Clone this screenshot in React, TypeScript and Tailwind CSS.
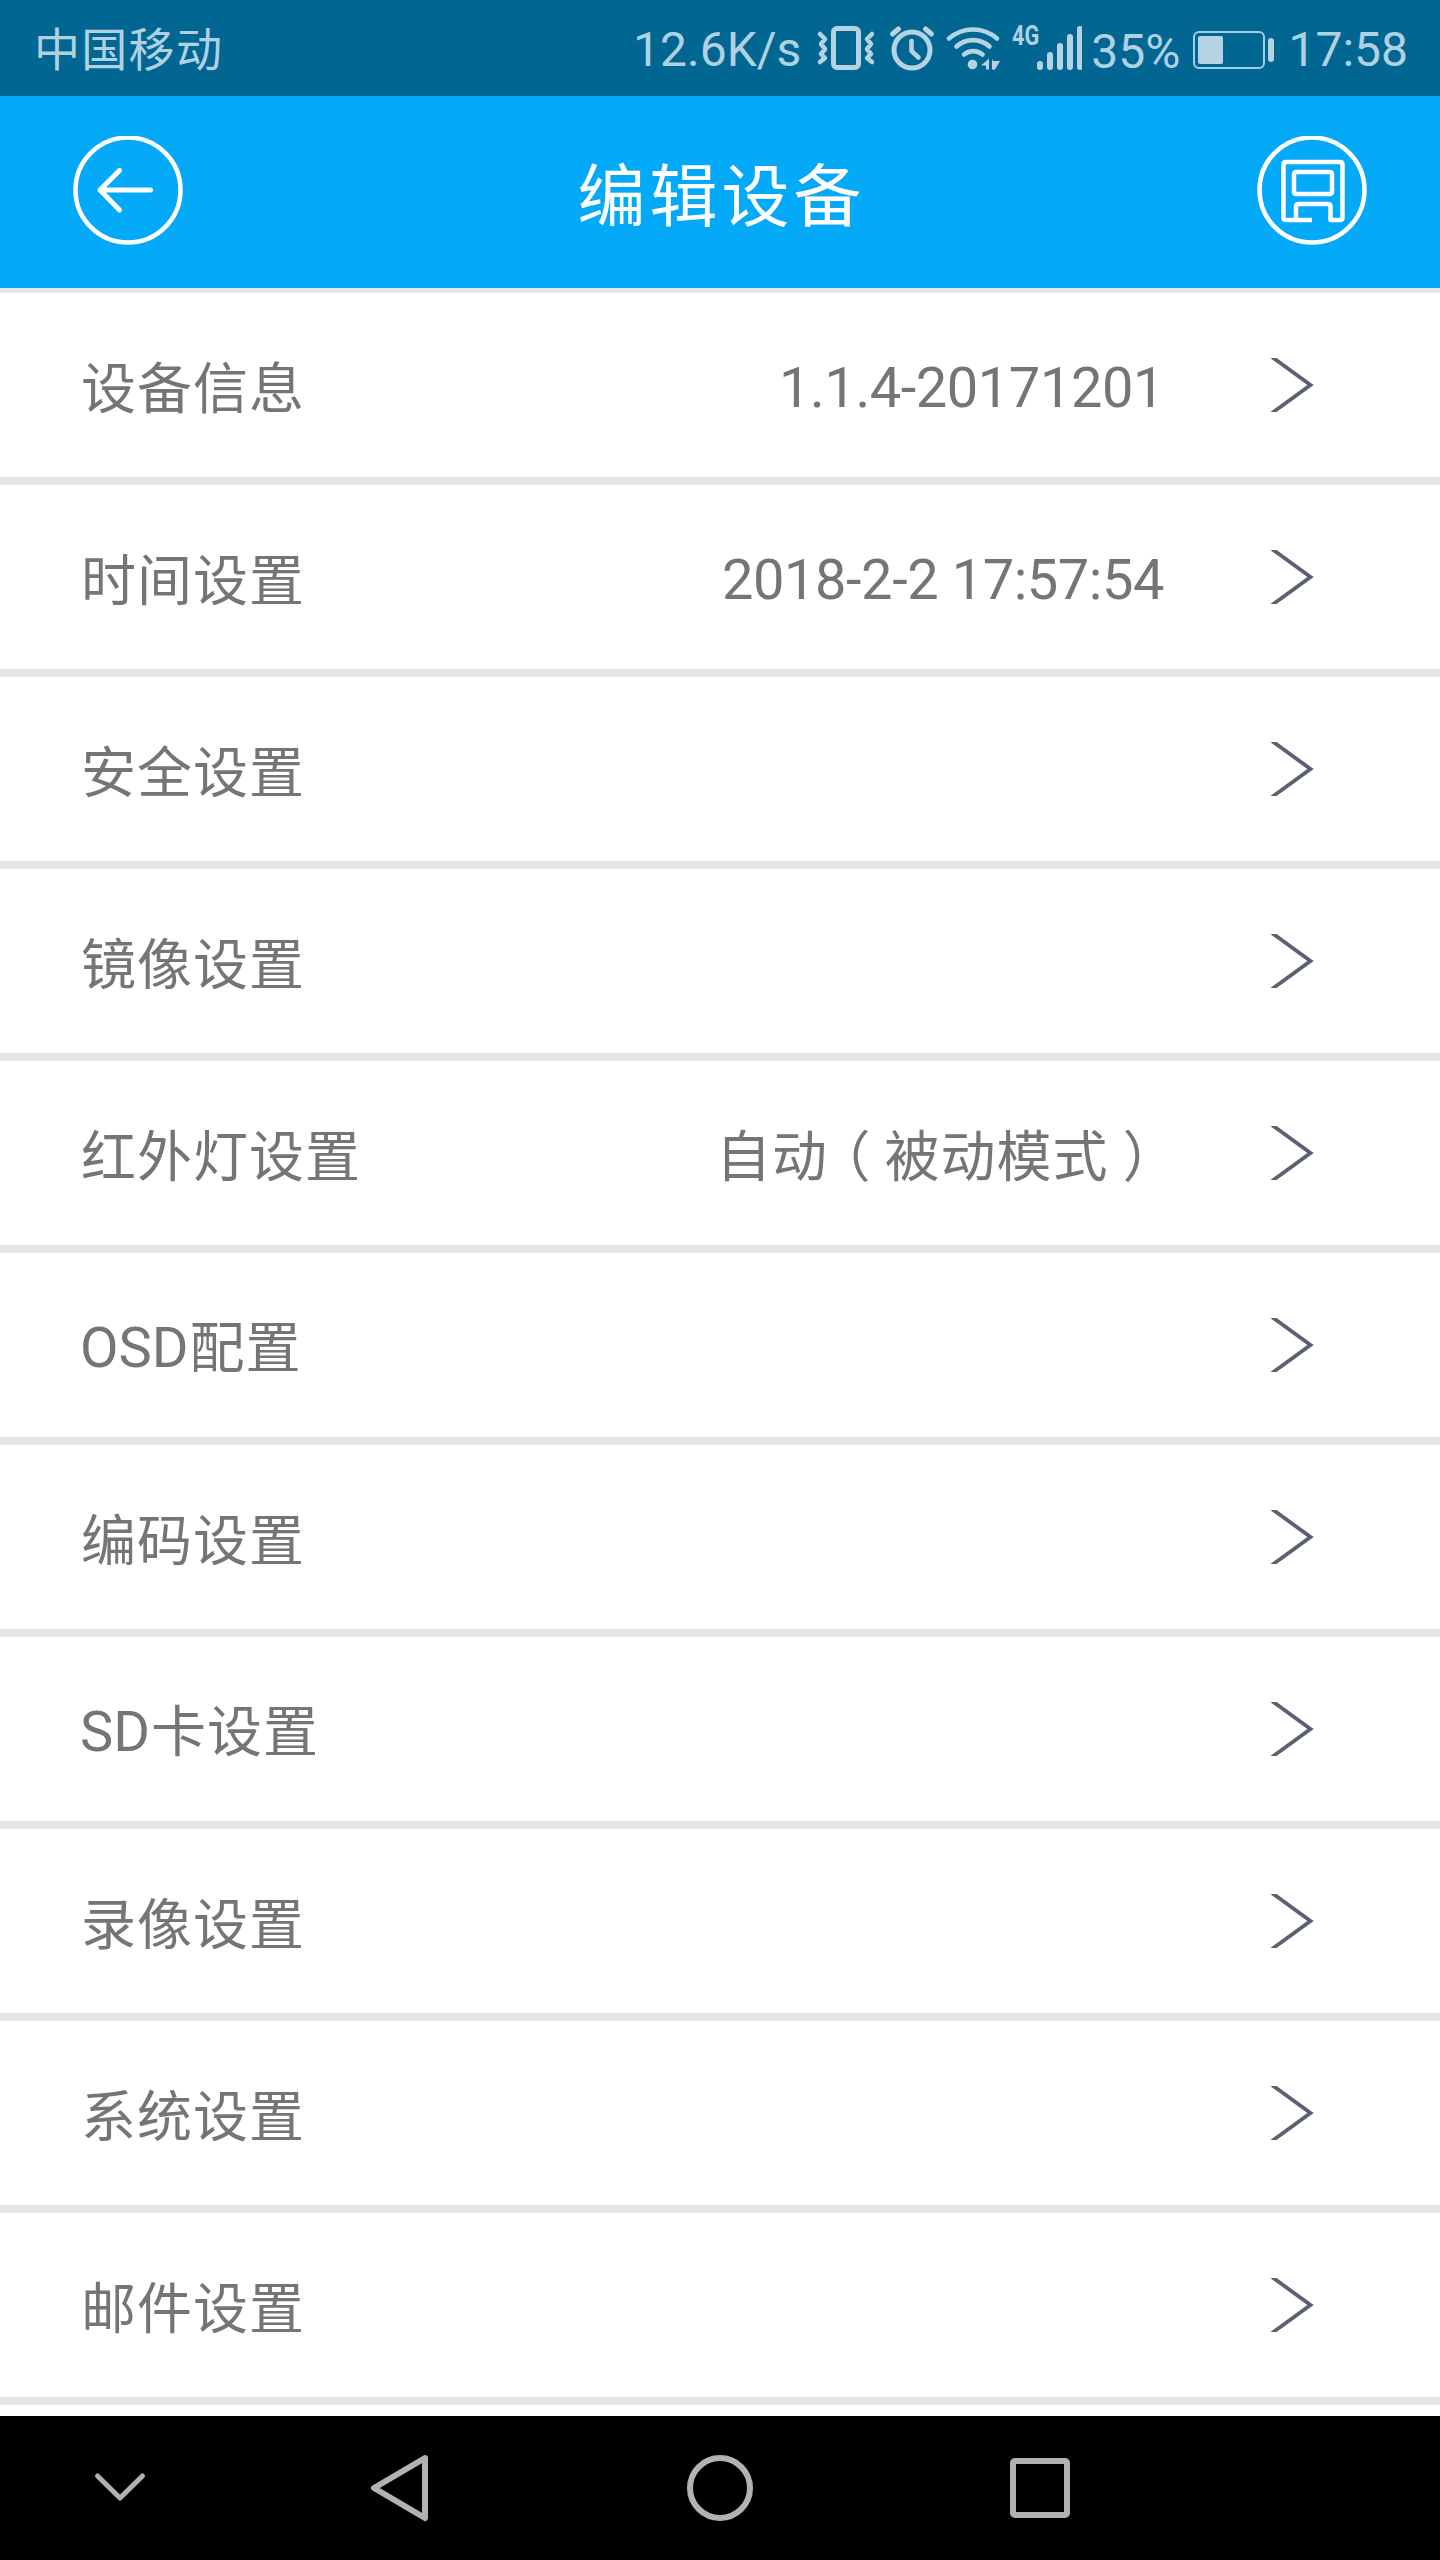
import type { ReactNode } from "react";

const rows: { label: string; latin?: string; value?: ReactNode; numeric?: boolean }[] = [
  { label: "设备信息", value: "1.1.4-20171201", numeric: true },
  { label: "时间设置", value: "2018-2-2 17:57:54", numeric: true },
  { label: "安全设置" },
  { label: "镜像设置" },
  {
    label: "红外灯设置",
    value: (
      <>
        自动<span className="ml-[15px] mr-[13px] [font-feature-settings:'halt']">（</span>被动模式
        <span className="ml-[14px] mr-[13px] [font-feature-settings:'halt']">）</span>
      </>
    ),
  },
  { label: "配置", latin: "OSD" },
  { label: "编码设置" },
  { label: "卡设置", latin: "SD" },
  { label: "录像设置" },
  { label: "系统设置" },
  { label: "邮件设置" },
];

function StatusIcons() {
  return (
    <svg className="ml-[15px] h-[96px] w-[266px] shrink-0" viewBox="816 0 266 96" fill="none" stroke="#b5d3e2" strokeLinecap="round" strokeLinejoin="round">
      {/* vibrate */}
      <rect x="833.5" y="28.5" width="25" height="39" rx="3.5" strokeWidth="5" />
      <path d="M820 34l5 5-4 5 4 5-4 5 4 4-5 4M872 34l-5 5 4 5-4 5 4 5-4 4 5 4" strokeWidth="4.5" />
      {/* alarm */}
      <circle cx="912" cy="50" r="18" strokeWidth="5" />
      <path d="M911.5 41v10l7 6.500" strokeWidth="4.600" />
      <path d="M892.500 34l6-5M931.500 34l-6-5" strokeWidth="5" />
      {/* wifi */}
      <path d="M949 38.500C963 26.500 983 26.500 997 38.500M956.500 46.500C966 38 980 38 989.500 46.500M964 54.500C969.500 50 977 50 982.500 54.500" strokeWidth="4.600" />
      <circle cx="972.500" cy="64.500" r="4.800" fill="#b5d3e2" stroke="none" />
      <path d="M989 58.500v11h-3v-4H981zM992 69.500v-11l1 2.500h7l-5 8.500z" fill="#b5d3e2" stroke="none" />
      {/* signal */}
      <path d="M1040 64v3M1050 55v12M1060 46v21M1070 37v30M1080 29v38" strokeWidth="6" />
    </svg>
  );
}

function Battery() {
  return (
    <svg className="ml-[12px] h-[96px] w-[84px] shrink-0" viewBox="1192 0 84 96" fill="#b5d3e2">
      <rect x="1194" y="32" width="70" height="36" rx="5" fill="none" stroke="#a5cde2" strokeWidth="2" />
      <rect x="1198" y="36" width="25" height="28" rx="2" />
      <rect x="1268" y="38" width="6" height="24" rx="3" />
    </svg>
  );
}

function BackIcon() {
  return (
    <svg className="h-[112px] w-[112px]" viewBox="72 136 112 112" fill="none" stroke="#fff" strokeWidth="4.5" strokeLinecap="round" strokeLinejoin="round">
      <circle cx="128" cy="190" r="52.500" />
      <path d="M150.500 190H100M119.500 170.500L100 190L119.500 210" strokeWidth="5" />
    </svg>
  );
}

function SaveIcon() {
  return (
    <svg className="h-[112px] w-[112px]" viewBox="1256 136 112 112" fill="none" stroke="#fff" strokeWidth="4.5" strokeLinejoin="round">
      <circle cx="1312" cy="190" r="52.500" />
      <path d="M1312 220H1286Q1283.500 220 1283.500 217.500V164.500Q1283.500 162 1286 162H1340Q1342.500 162 1342.500 164.500V217.500Q1342.500 220 1340 220H1330.500V206.500Q1330.500 204 1328 204H1298.500Q1296 204 1296 206.500V220" />
      <rect x="1294" y="172" width="38" height="22" rx="2" />
    </svg>
  );
}

function Chevron() {
  return (
    <svg className="ml-[106px] h-[54px] w-[44px] shrink-0" viewBox="1270 358 44 54" fill="none" stroke="#586072" strokeWidth="3.8">
      <path d="M1272 357L1310.500 385L1272 413" />
    </svg>
  );
}

export default function App() {
  return (
    <div className="flex h-[2560px] w-[1440px] flex-col overflow-hidden bg-white font-['Roboto','Noto_Sans_CJK_SC',sans-serif]">
      <div className="flex h-[96px] shrink-0 items-center bg-[#026692] pl-[34px] text-[48px] leading-[56px] text-[#b0d1e2]">
        <span className="mt-[3px] text-[46px] tracking-[1.3px]">中国移动</span>
        <span className="ml-auto mt-[3px]">12.6K/s</span>
        <div className="relative">
          <StatusIcons />
          <span className="absolute left-[211px] top-[21px] origin-left scale-x-[0.8] text-[27px] font-bold leading-[30px]">4G</span>
        </div>
        <span className="ml-[9px] mt-[7px]">35%</span>
        <Battery />
        <span className="ml-[12px] mr-[32px] mt-[3px]">17:58</span>
      </div>

      <div className="flex h-[192px] shrink-0 items-center justify-between bg-[#04a9f8] px-[72px]">
        <BackIcon />
        <h1 className="ml-[3px] mt-[11px] text-[68px] font-normal leading-[80px] tracking-[4px] text-white">编辑设备</h1>
        <SaveIcon />
      </div>

      <div className="min-h-0 flex-1 overflow-hidden border-t-[5px] border-[#e5e5e5]">
        {rows.map((row) => (
          <div
            key={row.label}
            className="flex h-[192px] items-center border-b-[8px] border-[#e5e5e5] pl-[80px] pr-[126px] text-[56px] leading-[66px] text-[#757575]"
          >
            <span className={row.latin ? "mt-[6px]" : "mt-[7px]"}>
              {row.latin}
              <span className="ml-px text-[55px] tracking-[1px]">{row.label}</span>
            </span>
            <span className={row.numeric ? "ml-auto mt-[6px] tracking-[-0.45px]" : "ml-auto mt-[7px] text-[55px] tracking-[1px]"}>
              {row.value}
            </span>
            <Chevron />
          </div>
        ))}
      </div>

      <div className="h-[144px] shrink-0 bg-black">
        <svg className="h-[144px] w-[1440px]" viewBox="0 2416 1440 144" fill="none" stroke="#b2b2b2" strokeWidth="6" strokeLinecap="round" strokeLinejoin="round">
          <path d="M97.500 2476L120 2498L142.500 2476" strokeWidth="5" />
          <path d="M425 2458L374 2488L425 2518Z" />
          <circle cx="720" cy="2488" r="30" />
          <rect x="1013" y="2461" width="54" height="54" rx="2" />
        </svg>
      </div>
    </div>
  );
}
